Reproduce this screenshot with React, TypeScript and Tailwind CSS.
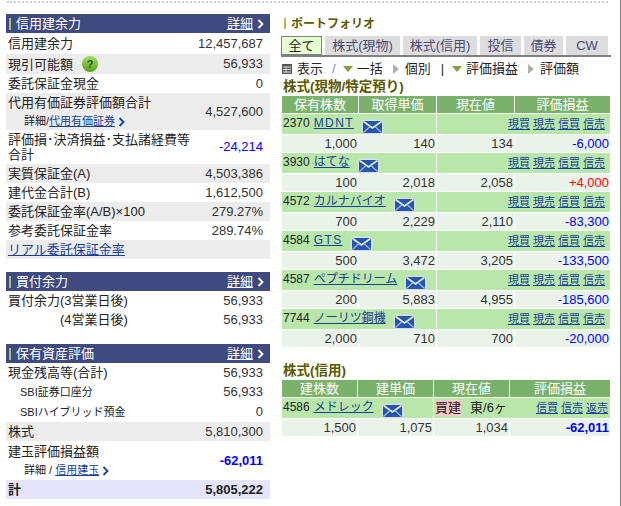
import React from "react";

const font = { fontFamily: '"Liberation Sans", "Noto Sans CJK JP", sans-serif' };

const MailIcon = () => (
  <svg width="23" height="16" viewBox="0 0 23 16" className="shrink-0">
    <rect x="0.5" y="0.5" width="22" height="15" rx="3" fill="#d5dde8" />
    <rect x="2" y="2" width="19" height="12" rx="1" fill="#2456ae" />
    <path d="M2.5 2.5 L11.5 9 L20.5 2.5" fill="none" stroke="#e4edf8" strokeWidth="1.6" />
    <path d="M2.5 13.5 L9 7.5 M20.5 13.5 L14 7.5" fill="none" stroke="#9db9e2" strokeWidth="1.2" />
  </svg>
);

const Chevron = ({ color = "#ffffff" }: { color?: string }) => (
  <svg width="7" height="10" viewBox="0 0 7 10" className="inline-block">
    <path d="M1.5 1 L5.5 5 L1.5 9" fill="none" stroke={color} strokeWidth="1.8" />
  </svg>
);

const HelpIcon = () => (
  <span className="ml-[9px] flex h-4 w-4 items-center justify-center rounded-full bg-gradient-to-b from-[#a5dc5a] to-[#55a31c] text-[11px] font-bold text-[#2a5a10]">
    ?
  </span>
);

const SectionHeader = ({ title }: { title: string }) => (
  <div className="flex h-[19px] items-center bg-[#3f4a80] pl-[3px] pr-[6px] text-white">
    <span className="h-[12px] w-[2px] bg-[#a3c46c]" />
    <span className="ml-[5px] flex-1 text-[13px]">{title}</span>
    <a className="mr-[4px] text-[13px] underline">詳細</a>
    <Chevron />
  </div>
);

const Row = ({
  label,
  value,
  gray,
  h = "h-[19px]",
  valueClass = "text-[#333333]",
}: {
  label: React.ReactNode;
  value?: string;
  gray?: boolean;
  h?: string;
  valueClass?: string;
}) => (
  <div className={`flex items-center justify-between pl-[2px] pr-[7px] text-[13px] text-[#222222] ${h} ${gray ? "bg-[#ececec]" : ""}`}>
    <div className="leading-[15px]">{label}</div>
    {value && <div className={valueClass}>{value}</div>}
  </div>
);

const Link = ({ children, className = "" }: { children: React.ReactNode; className?: string }) => (
  <a className={`text-[#1a3f9a] underline ${className}`}>{children}</a>
);

const tabs = ["全て", "株式(現物)", "株式(信用)", "投信", "債券", "CW"];
const tabWidths = ["w-[41px]", "w-[75px]", "w-[74px]", "w-[41px]", "w-[39px]", "w-[42px]"];

const stocks = [
  { code: "2370", name: "MDNT", latin: true, qty: "1,000", cost: "140", now: "134", pl: "-6,000" },
  { code: "3930", name: "はてな", qty: "100", cost: "2,018", now: "2,058", pl: "+4,000" },
  { code: "4572", name: "カルナバイオ", qty: "700", cost: "2,229", now: "2,110", pl: "-83,300" },
  { code: "4584", name: "GTS", latin: true, qty: "500", cost: "3,472", now: "3,205", pl: "-133,500" },
  { code: "4587", name: "ペプチドリーム", qty: "200", cost: "5,883", now: "4,955", pl: "-185,600" },
  { code: "7744", name: "ノーリツ鋼機", qty: "2,000", cost: "710", now: "700", pl: "-20,000" },
];

const HeadCell = ({ children }: { children: string }) => (
  <div className="flex h-[17px] items-center justify-center bg-[#7bb26b] text-[13px] text-white">{children}</div>
);

const NameCell = ({ code, name, latin }: { code: string; name: string; latin?: boolean }) => (
  <div className="col-span-2 flex h-[20px] items-center bg-[#b9e7a9] pl-[1px] text-[12px] text-[#222222]">
    <span className="mb-[3px] mr-[4px]">{code}</span>
    <Link className={`mb-[3px] ${latin ? "tracking-[1.4px]" : ""}`}>{name}</Link>
    <span className="ml-[7px] mt-[5px]">
      <MailIcon />
    </span>
  </div>
);

const DataCell = ({ children, className = "text-[#333333]" }: { children: string; className?: string }) => (
  <div className={`flex h-[17px] items-center justify-end bg-[#eaf3e9] pr-[1px] text-[13px] ${className}`}>{children}</div>
);

const Actions = ({ items }: { items: string[] }) => (
  <div className="flex items-center gap-[3px] text-[11px]">
    {items.map((a) => (
      <Link key={a}>{a}</Link>
    ))}
  </div>
);

const plClass = (pl: string) => (pl.startsWith("+") ? "text-[#ff0000]" : "text-[#0000ff]");

const Down = ({ className = "" }: { className?: string }) => (
  <svg width="10" height="6" viewBox="0 0 10 6" className={className}>
    <path d="M0 0h10L5 6z" fill="#8a9a3a" />
  </svg>
);

const Right = ({ className = "" }: { className?: string }) => (
  <svg width="6" height="10" viewBox="0 0 6 10" className={className}>
    <path d="M0 0v10L6 5z" fill="#b0b0b0" />
  </svg>
);

export default function App() {
  return (
    <div className="relative h-[506px] w-[621px] overflow-hidden bg-white" style={font}>
      <div className="absolute right-0 top-0 h-full w-[1px] bg-[#808080]" />
      <div className="mx-[7px] h-[14px] pt-[1px]">
        <div className="w-[601px] border-t-2 border-dotted border-[#cccccc]" />
      </div>
      <div className="flex pl-[6px]">
        {/* left column */}
        <div className="w-[264px]">
          <SectionHeader title="信用建余力" />
          <Row label="信用建余力" value="12,457,687" h="h-[21px]" />
          <Row
            gray
            h="h-[20px]"
            label={
              <span className="flex items-center">
                現引可能額
                <HelpIcon />
              </span>
            }
            value="56,933"
          />
          <Row label="委託保証金現金" value="0" />
          <Row
            gray
            h="h-[37px]"
            label={
              <div>
                <div className="leading-[18px]">代用有価証券評価額合計</div>
                <div className="pl-[16px] text-[11px] leading-[18px]">
                  詳細/<Link>代用有価証券</Link> <Chevron color="#1a3f9a" />
                </div>
              </div>
            }
            value="4,527,600"
          />
          <Row
            h="h-[34px]"
            label={<div className="w-[190px]">評価損･決済損益･支払諸経費等合計</div>}
            value="-24,214"
            valueClass="text-[#0000ff]"
          />
          <Row gray label="実質保証金(A)" value="4,503,386" />
          <Row label="建代金合計(B)" value="1,612,500" />
          <Row gray label="委託保証金率(A/B)×100" value="279.27%" />
          <Row label="参考委託保証金率" value="289.74%" />
          <Row gray label={<Link>リアル委託保証金率</Link>} />

          <div className="mt-[13px]">
            <SectionHeader title="買付余力" />
            <Row label="買付余力(3営業日後)" value="56,933" />
            <Row label={<span className="pl-[52px]">(4営業日後)</span>} value="56,933" />
          </div>

          <div className="mt-[15px]">
            <SectionHeader title="保有資産評価" />
            <Row label="現金残高等(合計)" value="56,933" />
            <Row label={<span className="pl-[12px] text-[11px]">SBI証券口座分</span>} value="56,933" />
            <Row label={<span className="pl-[12px] text-[11px]">SBIハイブリッド預金</span>} value="0" h="h-[21px]" />
            <Row gray label="株式" value="5,810,300" />
            <Row
              h="h-[39px]"
              label={
                <div>
                  <div className="leading-[18px]">建玉評価損益額</div>
                  <div className="pl-[16px] text-[11px] leading-[18px]">
                    詳細 / <Link>信用建玉</Link> <Chevron color="#1a3f9a" />
                  </div>
                </div>
              }
              value="-62,011"
              valueClass="text-[#0000ff] font-bold"
            />
            <div className="flex h-[19px] items-center justify-between bg-[#e4e4fb] pl-[2px] pr-[7px] text-[13px] font-bold text-[#222222]">
              <span>計</span>
              <span>5,805,222</span>
            </div>
          </div>
        </div>

        {/* right column */}
        <div className="ml-[11px] w-[330px]">
          <div className="flex h-[22px] items-center pb-[3px] pl-[3px] text-[12px] font-bold text-[#5a5a00]">
            <span className="mr-[5px] h-[11px] w-[2px] bg-[#c8b04a]" />
            ポートフォリオ
          </div>
          <div className="flex border-b-2 border-[#808080]">
            {tabs.map((t, i) => (
              <div
                key={t}
                className={`flex h-[19px] items-center justify-center text-[13px] ${tabWidths[i]} ${
                  i === 0
                    ? "border border-[#808080] bg-[#e6ffd0] text-[#222222]"
                    : "ml-[3px] bg-[#dddddd] text-[#4a4a7a]"
                }`}
              >
                {t}
              </div>
            ))}
          </div>
          <div className="flex h-[23px] items-center pl-[1px] text-[13px] text-[#222222]">
            <svg width="10" height="10" viewBox="0 0 10 10" className="mr-[5px]">
              <rect width="10" height="10" fill="#555555" />
              <path d="M1 3h8M1 5.5h8M1 8h8M4 3v6" stroke="#dddddd" strokeWidth="1" />
            </svg>
            <span>表示</span>
            <span className="ml-[9px] text-[#8080c0]">/</span>
            <Down className="ml-[7px] mr-[4px]" />
            <span>一括</span>
            <Right className="ml-[10px] mr-[6px]" />
            <span>個別</span>
            <span className="ml-[10px]">|</span>
            <Down className="ml-[8px] mr-[4px]" />
            <span>評価損益</span>
            <Right className="ml-[10px] mr-[6px]" />
            <span>評価額</span>
          </div>
          <div className="flex h-[15px] items-center pl-[2px] text-[13.5px] font-bold text-[#5a5a00]">株式(現物/特定預り)</div>

          <div className="ml-[1px] mt-[1px] grid grid-cols-[76px_77px_77px_95px] gap-[1px] bg-white">
            <HeadCell>保有株数</HeadCell>
            <HeadCell>取得単価</HeadCell>
            <HeadCell>現在値</HeadCell>
            <HeadCell>評価損益</HeadCell>
            {stocks.map((s) => (
              <React.Fragment key={s.code}>
                <NameCell code={s.code} name={s.name} latin={s.latin} />
                <div className="col-span-2 flex h-[20px] items-center justify-end bg-[#b9e7a9] pr-[5px]">
                  <Actions items={["現買", "現売", "信買", "信売"]} />
                </div>
                <DataCell>{s.qty}</DataCell>
                <DataCell>{s.cost}</DataCell>
                <DataCell>{s.now}</DataCell>
                <DataCell className={plClass(s.pl)}>{s.pl}</DataCell>
              </React.Fragment>
            ))}
          </div>

          <div className="mt-[15px] flex h-[18px] items-center pl-[2px] text-[13.5px] font-bold text-[#5a5a00]">株式(信用)</div>
          <div className="ml-[1px] grid grid-cols-[75px_75px_75px_100px] gap-[1px] bg-white">
            <HeadCell>建株数</HeadCell>
            <HeadCell>建単価</HeadCell>
            <HeadCell>現在値</HeadCell>
            <HeadCell>評価損益</HeadCell>
            <NameCell code="4586" name="メドレック" />
            <div className="col-span-2 flex h-[20px] items-center justify-between bg-[#b9e7a9] pr-[2px] text-[13px] text-[#222222]">
              <div className="flex items-center">
                <span className="ml-[1px] bg-[#ffc8c8] leading-[16px]">買建</span>
                <span className="ml-[9px]">東/6ヶ</span>
              </div>
              <Actions items={["信買", "信売", "返売"]} />
            </div>
            <DataCell>1,500</DataCell>
            <DataCell>1,075</DataCell>
            <DataCell>1,034</DataCell>
            <DataCell className="font-bold text-[#0000ff]">-62,011</DataCell>
          </div>
        </div>
      </div>
    </div>
  );
}
